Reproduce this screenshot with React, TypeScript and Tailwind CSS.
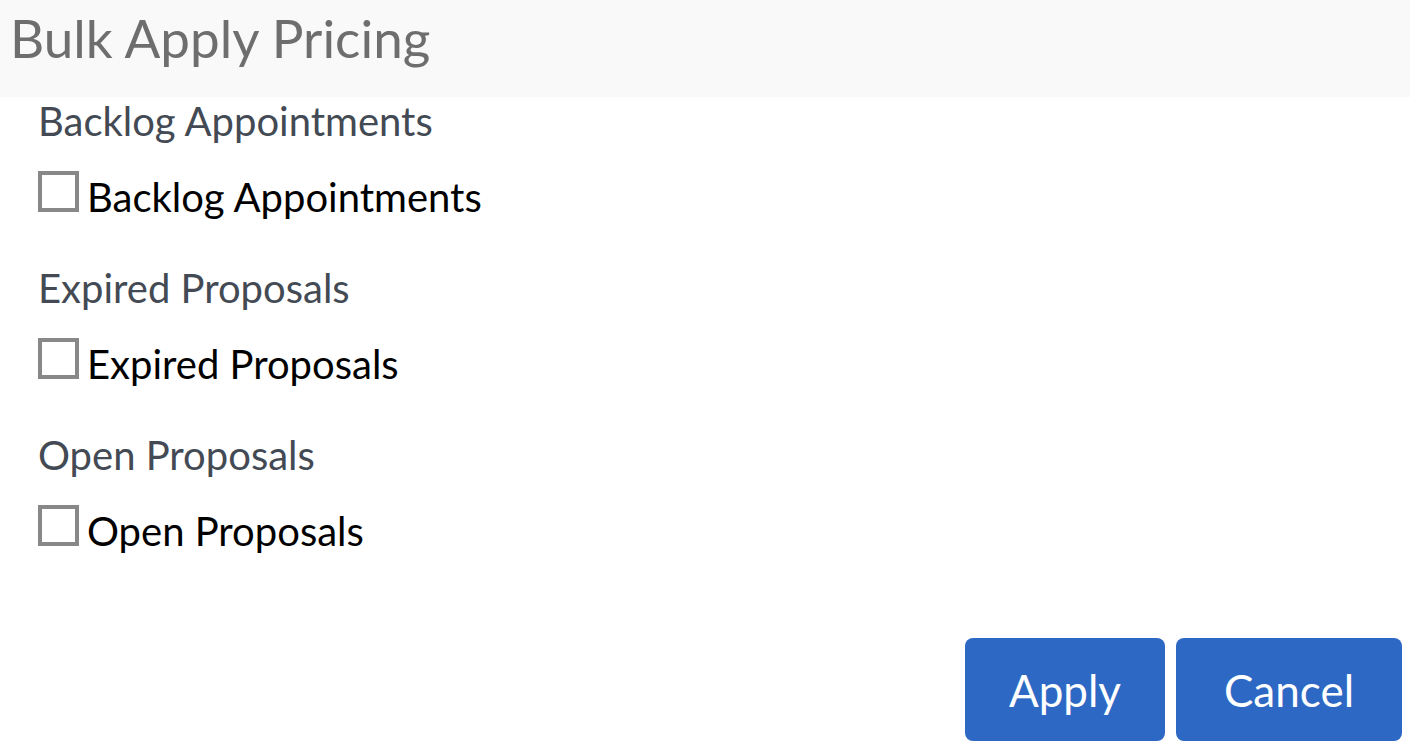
export default function App() {
  const groups = ['Backlog Appointments', 'Expired Proposals', 'Open Proposals'];
  return (
    <div className="w-[1410px] h-[750px] bg-white overflow-hidden font-['Lato',sans-serif]">
      <div className="h-[97px] bg-[#f9f9f9] pl-[10px] pt-[8px]">
        <h1 className="text-[53px] leading-[60px] text-[#6e6e6e]">Bulk Apply Pricing</h1>
      </div>
      <div className="pl-[38px]">
        {groups.map((g) => (
          <div key={g} className="h-[167px] pt-[2px]">
            <div className="text-[40px] leading-[44px] text-[#434a54]">{g}</div>
            <label className="mt-[28px] flex items-start gap-[8px]">
              <span className="w-[41px] h-[41px] border-[4px] border-[#888888] bg-white shrink-0" />
              <span className="text-[40px] leading-[46px] text-black mt-[3px]">{g}</span>
            </label>
          </div>
        ))}
      </div>
      <div className="flex justify-end gap-[11px] pr-[8px] mt-[40px]">
        <button className="w-[200px] h-[103px] rounded-[8px] bg-[#2d69c4] text-white text-[44px]">Apply</button>
        <button className="w-[226px] h-[103px] rounded-[8px] bg-[#2d69c4] text-white text-[44px]">Cancel</button>
      </div>
    </div>
  );
}
